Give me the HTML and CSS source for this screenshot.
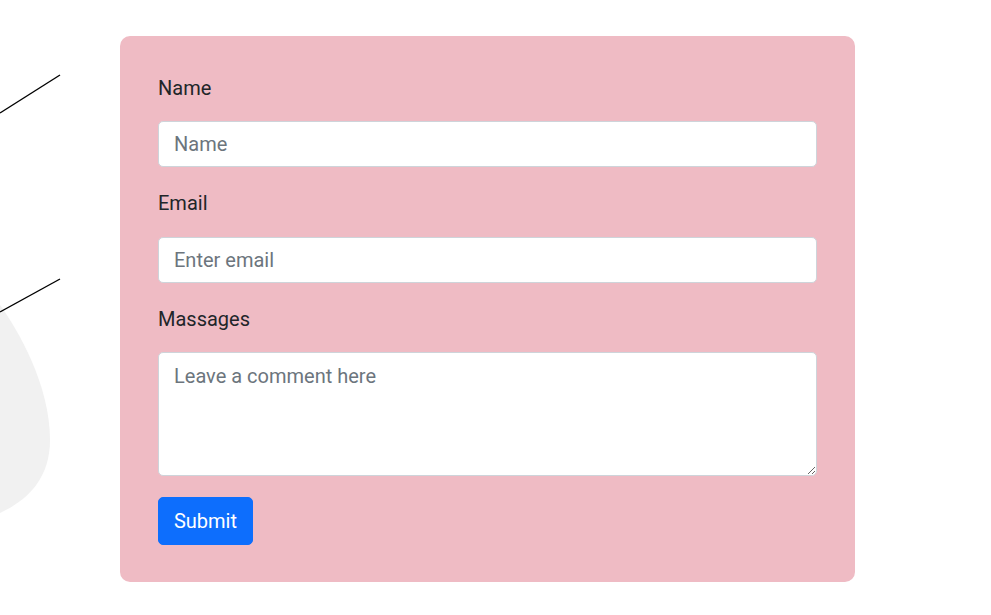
FILE: index.html
```html
<!DOCTYPE html>
<html lang="en">
<head>
<meta charset="utf-8">
<title>Contact</title>
<link rel="stylesheet" href="styles.css">
</head>
<body>
<svg class="deco" width="70" height="530" viewBox="0 0 70 530" aria-hidden="true">
  <path d="M0,305 C18,330 50,385 50,440 C50,478 28,500 0,513 Z" fill="#f1f1f1"/>
  <line x1="0" y1="113" x2="60" y2="75" stroke="#000" stroke-width="1.4"/>
  <line x1="0" y1="312" x2="60" y2="279" stroke="#000" stroke-width="1.4"/>
</svg>
<main class="page">
  <form class="card">
    <div class="group">
      <label class="label" for="name">Name</label>
      <input class="control" id="name" type="text" placeholder="Name">
    </div>
    <div class="group">
      <label class="label" for="email">Email</label>
      <input class="control" id="email" type="email" placeholder="Enter email">
    </div>
    <div class="group group-last">
      <label class="label" for="msg">Massages</label>
      <textarea class="control area" id="msg" placeholder="Leave a comment here"></textarea>
    </div>
    <button class="btn" type="button">Submit</button>
  </form>
</main>
</body>
</html>
```
FILE: styles.css
```css
html, body {
  margin: 0;
  padding: 0;
  background: #fff;
}
body {
  font-family: Roboto, "Liberation Sans", sans-serif;
  color: #212529;
  position: relative;
  min-height: 615px;
}
.deco {
  position: absolute;
  left: 0;
  top: 0;
}
.page {
  padding: 36px 0 0 120px;
}
.card {
  width: 735px;
  box-sizing: border-box;
  padding: 38px 38px 37px;
  background: #efbbc4;
  border-radius: 10px;
}
.group {
  margin-bottom: 22px;
}
.group-last {
  margin-bottom: 21px;
}
.label {
  display: block;
  font-size: 20px;
  line-height: 28.8px;
  margin-bottom: 18.6px;
  color: #212529;
}
.control {
  display: block;
  width: 100%;
  box-sizing: border-box;
  height: 46px;
  padding: 8px 15px;
  font-family: Roboto, "Liberation Sans", sans-serif;
  font-size: 20px;
  line-height: 30px;
  color: #212529;
  background: #fff;
  border: 1px solid #ced4da;
  border-radius: 5px;
  outline: none;
}
.control::placeholder {
  color: #6c757d;
  opacity: 1;
}
.area {
  height: 124px;
  resize: vertical;
}
.btn {
  display: block;
  height: 48px;
  width: 95px;
  padding: 0;
  font-family: Roboto, "Liberation Sans", sans-serif;
  font-size: 20px;
  color: #fff;
  background: #0d6efd;
  border: 1px solid #0d6efd;
  border-radius: 5px;
}
```
